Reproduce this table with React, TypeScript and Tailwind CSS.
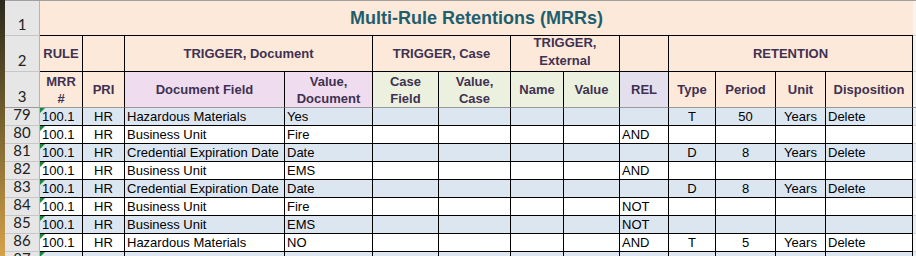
import React from "react";
import clsx from "clsx";

const HEAD = "text-[#3F3151]";
const PEACH = "bg-[#FDE9D9]";
const PINK = "bg-[#EFDDEF]";
const GREEN = "bg-[#EBF1DE]";
const LAV = "bg-[#E4DFEC]";
const BLUE = "bg-[#DCE6F1]";

type Row = {
  n: number;
  mrr: string;
  pri: string;
  field: string;
  value: string;
  rel?: string;
  type?: string;
  period?: string;
  unit?: string;
  disp?: string;
};

const rows: Row[] = [
  { n: 79, mrr: "100.1", pri: "HR", field: "Hazardous Materials", value: "Yes", type: "T", period: "50", unit: "Years", disp: "Delete" },
  { n: 80, mrr: "100.1", pri: "HR", field: "Business Unit", value: "Fire", rel: "AND" },
  { n: 81, mrr: "100.1", pri: "HR", field: "Credential Expiration Date", value: "Date", type: "D", period: "8", unit: "Years", disp: "Delete" },
  { n: 82, mrr: "100.1", pri: "HR", field: "Business Unit", value: "EMS", rel: "AND" },
  { n: 83, mrr: "100.1", pri: "HR", field: "Credential Expiration Date", value: "Date", type: "D", period: "8", unit: "Years", disp: "Delete" },
  { n: 84, mrr: "100.1", pri: "HR", field: "Business Unit", value: "Fire", rel: "NOT" },
  { n: 85, mrr: "100.1", pri: "HR", field: "Business Unit", value: "EMS", rel: "NOT" },
  { n: 86, mrr: "100.1", pri: "HR", field: "Hazardous Materials", value: "NO", rel: "AND", type: "T", period: "5", unit: "Years", disp: "Delete" },
  { n: 87, mrr: "100.10", pri: "ORM", field: "Subject", value: "Yes", disp: "Transfer" },
];

function RowNum({ n, h, last }: { n: number; h: string; last?: string }) {
  return (
    <div
      className={clsx(
        "flex items-end justify-center pb-[3px] bg-[#E6E6E6] border-r border-r-[#B4B4B4] border-b font-['Lato',sans-serif] text-[15px] leading-[16px] text-[#222]",
        last ?? "border-b-[#C6C6C6]",
        h
      )}
    >
      {n}
    </div>
  );
}

function Head({
  children,
  bg,
  span,
  bottom,
  two,
}: {
  children?: React.ReactNode;
  bg: string;
  span?: string;
  bottom?: string;
  two?: boolean;
}) {
  return (
    <div
      className={clsx(
        "flex items-center justify-center text-center font-bold text-[13px] border-r border-r-black border-b",
        two ? "leading-[18px] pb-[3px]" : "leading-[17px]",
        bottom ?? "border-b-black",
        HEAD,
        bg,
        span
      )}
    >
      {children}
    </div>
  );
}

function Cell({ text, center, bg, flag }: { text?: string; center?: boolean; bg: string; flag?: boolean }) {
  return (
    <div
      className={clsx(
        "relative flex items-end h-[18px] border-r border-b border-black text-[13px] leading-[17px] text-black whitespace-nowrap overflow-hidden",
        center ? "justify-center" : "pl-[2px]",
        bg
      )}
    >
      {flag && (
        <span className="absolute left-0 top-0 w-0 h-0 border-t-[5px] border-r-[5px] border-t-[#16893A] border-r-transparent" />
      )}
      {text}
    </div>
  );
}

export default function App() {
  return (
    <div className="flex h-[256px] w-[916px] overflow-hidden bg-white font-['Liberation_Sans',Arial,sans-serif]">
      <div className="w-[5px] shrink-0 bg-linear-to-b from-[#2b2a1b] via-[#7a6530] to-[#d6a24a]" />
      <div className="flex-1 border-t border-t-[#A0A0A0]">
        <div className="grid grid-cols-[35px_43px_42px_160px_88px_66px_72px_53px_56px_49px_47px_60px_50px_87px_1fr]">
          {/* row 1 */}
          <RowNum n={1} h="h-[35px]" />
          <div
            className={clsx(
              "col-span-13 h-[35px] flex items-center justify-center border-b border-b-black text-[18px] leading-[18px] font-bold text-[#1E5E6E]",
              PEACH
            )}
          >
            Multi-Rule Retentions (MRRs)
          </div>
          <div className="h-[35px] bg-[#F4F4F4] border-b border-b-[#D4D4D4]" />

          {/* row 2 */}
          <RowNum n={2} h="h-[36px]" />
          <Head bg={PEACH} span="h-[36px]">RULE</Head>
          <Head bg={PEACH} span="h-[36px]" />
          <Head bg={PEACH} span="col-span-2 h-[36px]">TRIGGER, Document</Head>
          <Head bg={PEACH} span="col-span-2 h-[36px]">TRIGGER, Case</Head>
          <Head bg={PEACH} span="col-span-2 h-[36px]" two>
            TRIGGER,
            <br />
            External
          </Head>
          <Head bg={PEACH} span="h-[36px]" />
          <Head bg={PEACH} span="col-span-4 h-[36px]">RETENTION</Head>
          <div className="h-[36px] bg-[#F4F4F4] border-b border-b-[#D4D4D4]" />

          {/* row 3 */}
          <RowNum n={3} h="h-[36px]" last="border-b-[#9A9A9A]" />
          <Head bg={PEACH} span="h-[36px]" bottom="border-b-[#9A9A9A]">
            MRR
            <br />#
          </Head>
          <Head bg={PEACH} span="h-[36px]" bottom="border-b-[#9A9A9A]">PRI</Head>
          <Head bg={PINK} span="h-[36px]" bottom="border-b-[#9A9A9A]">Document Field</Head>
          <Head bg={PINK} span="h-[36px]" bottom="border-b-[#9A9A9A]">
            Value,
            <br />
            Document
          </Head>
          <Head bg={GREEN} span="h-[36px]" bottom="border-b-[#9A9A9A]">
            Case
            <br />
            Field
          </Head>
          <Head bg={GREEN} span="h-[36px]" bottom="border-b-[#9A9A9A]">
            Value,
            <br />
            Case
          </Head>
          <Head bg={GREEN} span="h-[36px]" bottom="border-b-[#9A9A9A]">Name</Head>
          <Head bg={GREEN} span="h-[36px]" bottom="border-b-[#9A9A9A]">Value</Head>
          <Head bg={LAV} span="h-[36px]" bottom="border-b-[#9A9A9A]">REL</Head>
          <Head bg={PEACH} span="h-[36px]" bottom="border-b-[#9A9A9A]">Type</Head>
          <Head bg={PEACH} span="h-[36px]" bottom="border-b-[#9A9A9A]">Period</Head>
          <Head bg={PEACH} span="h-[36px]" bottom="border-b-[#9A9A9A]">Unit</Head>
          <Head bg={PEACH} span="h-[36px]" bottom="border-b-[#9A9A9A]">Disposition</Head>
          <div className="h-[36px] bg-[#F4F4F4] border-b border-b-[#9A9A9A]" />

          {/* data rows */}
          {rows.map((r) => {
            const bg = r.n % 2 === 1 ? BLUE : "bg-white";
            return (
              <React.Fragment key={r.n}>
                <RowNum n={r.n} h="h-[18px]" />
                <Cell text={r.mrr} bg={bg} flag />
                <Cell text={r.pri} bg={bg} center />
                <Cell text={r.field} bg={bg} />
                <Cell text={r.value} bg={bg} />
                <Cell bg={bg} />
                <Cell bg={bg} />
                <Cell bg={bg} />
                <Cell bg={bg} />
                <Cell text={r.rel} bg={bg} />
                <Cell text={r.type} bg={bg} center />
                <Cell text={r.period} bg={bg} center />
                <Cell text={r.unit} bg={bg} center />
                <Cell text={r.disp} bg={bg} />
                <div className={clsx("h-[18px] border-b border-b-[#D4D4D4]", r.n % 2 === 1 ? "bg-[#E8EEF6]" : "bg-[#F8F8F8]")} />
              </React.Fragment>
            );
          })}
        </div>
      </div>
    </div>
  );
}
